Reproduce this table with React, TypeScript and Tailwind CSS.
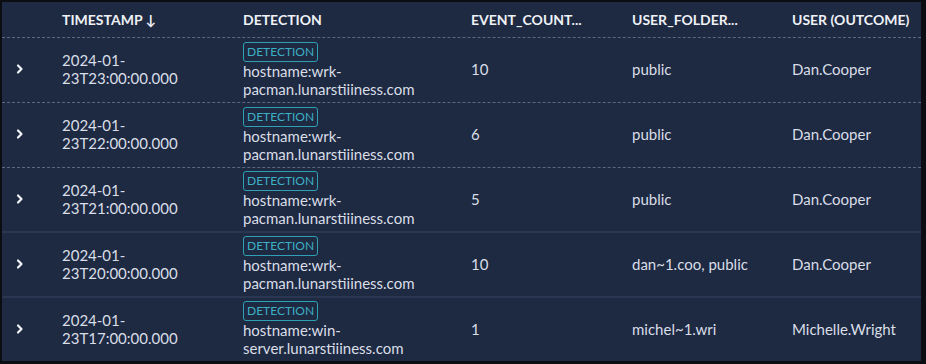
import React from 'react';

interface Row {
  ts1: string;
  ts2: string;
  host1: string;
  host2: string;
  count: string;
  folder: string;
  user: string;
  border: 'dashed' | 'solid';
}

const rows: Row[] = [
  { ts1: '2024-01-', ts2: '23T23:00:00.000', host1: 'hostname:wrk-', host2: 'pacman.lunarstiiiness.com', count: '10', folder: 'public', user: 'Dan.Cooper', border: 'dashed' },
  { ts1: '2024-01-', ts2: '23T22:00:00.000', host1: 'hostname:wrk-', host2: 'pacman.lunarstiiiness.com', count: '6', folder: 'public', user: 'Dan.Cooper', border: 'dashed' },
  { ts1: '2024-01-', ts2: '23T21:00:00.000', host1: 'hostname:wrk-', host2: 'pacman.lunarstiiiness.com', count: '5', folder: 'public', user: 'Dan.Cooper', border: 'solid' },
  { ts1: '2024-01-', ts2: '23T20:00:00.000', host1: 'hostname:wrk-', host2: 'pacman.lunarstiiiness.com', count: '10', folder: 'dan~1.coo, public', user: 'Dan.Cooper', border: 'solid' },
  { ts1: '2024-01-', ts2: '23T17:00:00.000', host1: 'hostname:win-', host2: 'server.lunarstiiiness.com', count: '1', folder: 'michel~1.wri', user: 'Michelle.Wright', border: 'solid' },
];

const cols = 'grid grid-cols-[60px_181px_228px_161px_160px_1fr]';

function Chevron() {
  return (
    <svg width="12" height="12" viewBox="0 0 12 12" fill="none">
      <path d="M4 2.5 L7.5 6 L4 9.5" stroke="#f1f4f8" strokeWidth="2.2" strokeLinecap="round" strokeLinejoin="round" />
    </svg>
  );
}

export default function App() {
  return (
    <div className="w-[926px] h-[364px] bg-[#0b0d12] pt-[2px] pl-[2px] pr-[5px] pb-[3px] font-['Lato','Noto_Sans',sans-serif]">
      <div className="h-full bg-[#1e2942] text-[15px] text-[#d9dee7] overflow-hidden">
        <div className={`${cols} h-[36px] items-center border-b border-dashed border-[#5b6784] text-[14px] font-bold text-[#eef1f5] whitespace-nowrap`}>
          <div />
          <div>TIMESTAMP ↓</div>
          <div>DETECTION</div>
          <div>EVENT_COUNT...</div>
          <div>USER_FOLDER...</div>
          <div>USER (OUTCOME)</div>
        </div>
        {rows.map((r, i) => (
          <div
            key={i}
            className={`${cols} h-[65px] items-center leading-[18px] pb-[2px] ${
              r.border === 'dashed' ? 'border-b border-dashed border-[#5b6784]' : 'border-b-2 border-[#2a3753]'
            }`}
          >
            <div className="pl-[12px] flex items-center">
              <Chevron />
            </div>
            <div>
              <div>{r.ts1}</div>
              <div>{r.ts2}</div>
            </div>
            <div>
              <span className="inline-block border border-[#2f9fb3] rounded-[3px] px-[3px] text-[12px] leading-[18px] text-[#3db0c4]">
                DETECTION
              </span>
              <div>{r.host1}</div>
              <div>{r.host2}</div>
            </div>
            <div>{r.count}</div>
            <div>{r.folder}</div>
            <div>{r.user}</div>
          </div>
        ))}
      </div>
    </div>
  );
}
